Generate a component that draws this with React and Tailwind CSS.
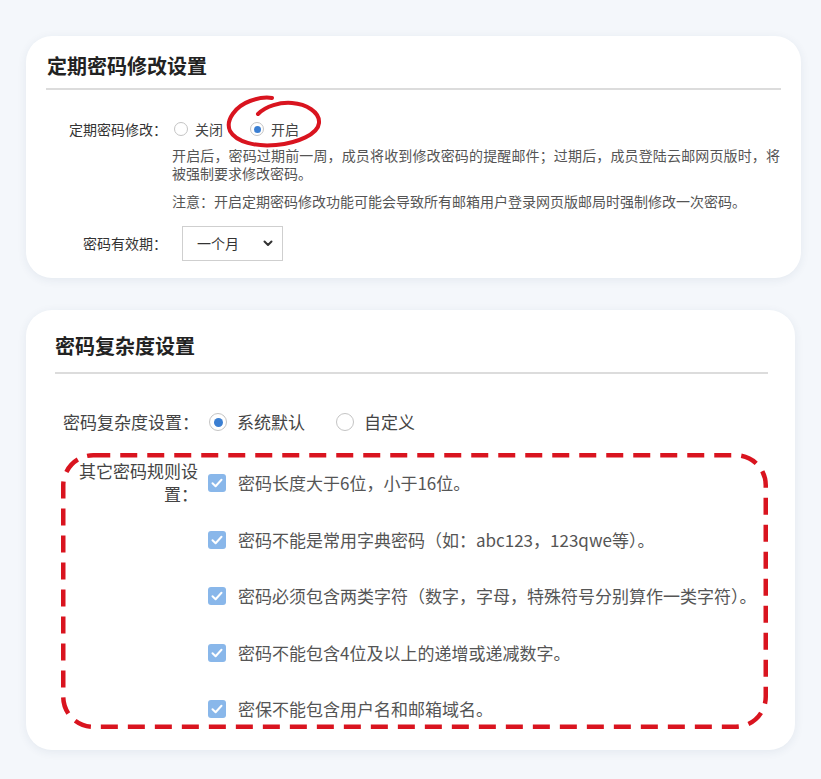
import React from 'react';

const font = { fontFamily: '"Noto Sans CJK SC", "Noto Sans", sans-serif' };

function Radio({ checked, size = 'sm' }) {
    const box = size === 'sm' ? 'w-[14px] h-[14px]' : 'w-[18px] h-[18px]';
    const dot = size === 'sm' ? 'w-[7px] h-[7px]' : 'w-[9px] h-[9px]';
    return (
        <span className={`${box} shrink-0 rounded-full border border-[#c4c4c4] bg-white flex items-center justify-center`}>
            {checked ? <span className={`${dot} rounded-full bg-[#3b7fd2]`} /> : null}
        </span>
    );
}

function Check() {
    return (
        <span className="w-[18px] h-[18px] shrink-0 rounded-[3px] bg-[#89b7ea] flex items-center justify-center">
            <svg width="12" height="10" viewBox="0 0 12 10" fill="none">
                <path d="M1.5 5.2 L4.6 8.2 L10.5 1.8" stroke="white" strokeWidth="2" strokeLinecap="round" strokeLinejoin="round" />
            </svg>
        </span>
    );
}

const rules = [
    '密码长度大于6位，小于16位。',
    '密码不能是常用字典密码（如：abc123，123qwe等）。',
    '密码必须包含两类字符（数字，字母，特殊符号分别算作一类字符）。',
    '密码不能包含4位及以上的递增或递减数字。',
    '密保不能包含用户名和邮箱域名。',
];

function App() {
    return (
        <div className="min-h-[779px] bg-[#f4f7fb] pt-[36px] pb-[30px]" style={font}>
            {/* 定期密码修改 */}
            <div className="relative ml-[26px] w-[775px] h-[242px] bg-white rounded-[26px] shadow-[0_2px_10px_rgba(40,60,100,0.08)] px-[20px] pt-[16px]">
                <h2 className="text-[20px] leading-[28px] font-bold text-[#222] pl-[1px] pb-[8px] border-b-2 border-[#dcdcdc]">定期密码修改设置</h2>

                <div className="flex items-center mt-[29px] h-[20px] text-[14px] text-[#333]">
                    <span className="w-[121px] text-right">定期密码修改：</span>
                    <div className="flex items-center ml-[7px]">
                        <Radio />
                        <span className="ml-[7px] text-[#444]">关闭</span>
                        <span className="ml-[27px]"><Radio checked /></span>
                        <span className="ml-[7px] text-[#444]">开启</span>
                    </div>
                </div>

                <div className="ml-[126px] w-[608px] mt-[7px] text-[14px] leading-[18px] text-[#555] text-justify">
                    开启后，密码过期前一周，成员将收到修改密码的提醒邮件；过期后，成员登陆云邮网页版时，将被强制要求修改密码。
                </div>
                <div className="ml-[126px] mt-[10px] text-[14px] leading-[18px] text-[#555]">
                    注意：开启定期密码修改功能可能会导致所有邮箱用户登录网页版邮局时强制修改一次密码。
                </div>

                <div className="flex items-center mt-[16px] text-[14px] text-[#333]">
                    <span className="w-[121px] text-right">密码有效期：</span>
                    <div className="ml-[15px] w-[101px] h-[35px] border border-[#cfcfcf] bg-white flex items-center justify-between pl-[14px] pr-[9px] text-[#333]">
                        <span>一个月</span>
                        <svg width="10" height="7" viewBox="0 0 10 7" fill="none">
                            <path d="M1.5 1.5 L5 5 L8.5 1.5" stroke="#333" strokeWidth="2" strokeLinecap="round" strokeLinejoin="round" />
                        </svg>
                    </div>
                </div>

                {/* 红圈标注 */}
                <svg className="absolute left-[194px] top-[56px]" width="106" height="62" viewBox="220 92 106 62" fill="none">
                    <path
                        d="M258 114 C266 106, 280 102, 292 103 C306 104, 320 112, 319 123 C318 134, 298 143, 276 145 C256 147, 236 142, 230 131 C225 120, 236 106, 250 101 C258 98, 266 97, 272 98"
                        stroke="#d9141f"
                        strokeWidth="4"
                        strokeLinecap="round"
                    />
                </svg>
            </div>

            {/* 密码复杂度 */}
            <div className="ml-[26px] mt-[32px] w-[769px] bg-white rounded-[26px] shadow-[0_2px_10px_rgba(40,60,100,0.08)] pl-[29px] pr-[27px] pt-[22px] pb-[21px]">
                <h2 className="text-[20px] leading-[28px] font-bold text-[#222] pb-[12px] border-b-2 border-[#dcdcdc]">密码复杂度设置</h2>

                <div className="flex items-center mt-[36px] h-[24px] text-[17px] text-[#444]">
                    <span className="ml-[8px]">密码复杂度设置：</span>
                    <div className="flex items-center ml-[10px]">
                        <Radio checked size="lg" />
                        <span className="ml-[10px]">系统默认</span>
                        <span className="ml-[31px]"><Radio size="lg" /></span>
                        <span className="ml-[10px]">自定义</span>
                    </div>
                </div>

                <div className="relative ml-[6px] mt-[19px] w-[707px] h-[276px] pt-[6px] flex">
                    {/* 红色虚线标注框 */}
                    <svg className="absolute left-0 top-0 pointer-events-none" width="707" height="276" viewBox="0 0 707 276" fill="none">
                        <rect x="2.25" y="2.25" width="702.5" height="271.5" rx="30" stroke="#d9141f" strokeWidth="4.5" strokeDasharray="17 10" />
                    </svg>
                    <div className="w-[137px] shrink-0 pl-[12px] text-right text-[17px] leading-[23px] text-[#444]">其它密码规则设置：</div>
                    <div className="ml-[10px] pt-[12px] flex flex-col gap-[32.5px]">
                        {rules.map((r) => (
                            <div key={r} className="flex items-center h-[24px] text-[17px] text-[#555] whitespace-nowrap">
                                <Check />
                                <span className="ml-[12px]">{r}</span>
                            </div>
                        ))}
                    </div>
                </div>
            </div>
        </div>
    );
}

export default App;
